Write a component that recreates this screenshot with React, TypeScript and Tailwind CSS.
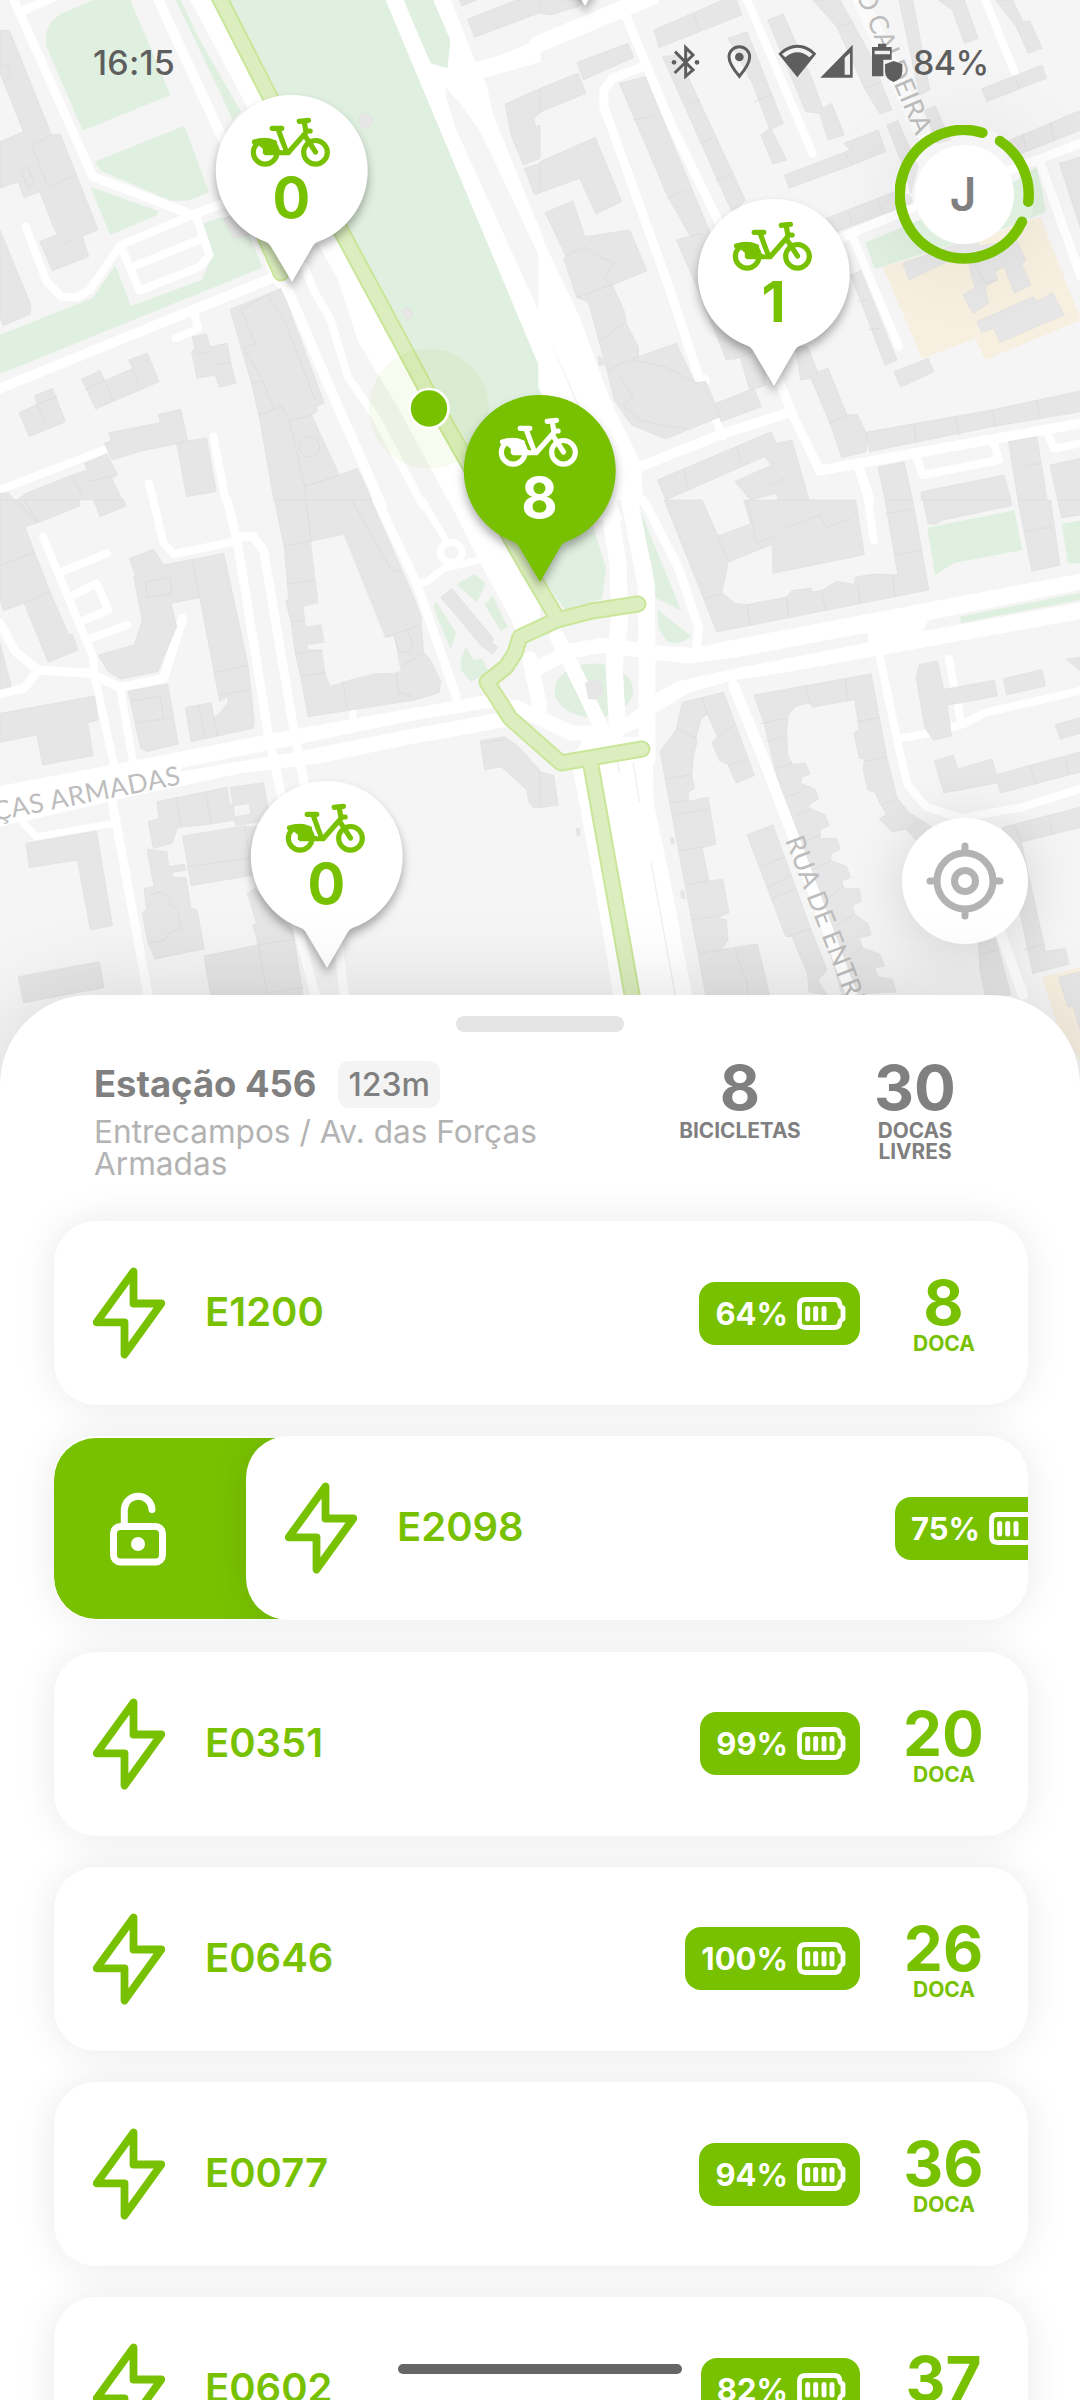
import React from "react";

type Tile = {
  transform: string;
  green: string;
  sand?: string;
  buildings: string;
  yards?: string;
  seams: string;
  roads: string;
  lanes: [number, string][];
};

const TILES: Tile[] = [
  {
    transform: "scale(0.34439 0.33333)",
    green:
      "M1172 0 1258 0 1308 120 1300 205 1250 190 1210 100Z M270 0 378 0 440 150 495 285 240 392 135 140 135 95 150 65 170 45Z M510 0 525 0 575 110 700 335 675 360 640 280Z M275 485 535 377 607 577 548 602 495 602 292 512Z M262 560 458 632 458 645 320 705Z M0 1005 270 893 335 795 380 918 585 840 620 765 590 670 650 650 680 715 725 705 762 803 0 1122Z",
    buildings:
      "M0 90 28 92 150 405 175 402 222 525 285 690 180 732 155 680 115 575 70 593 52 545 0 565 0 425 68 395 0 220Z M115 725 165 705 178 732 240 712 258 770 152 812Z M0 690 90 915 88 942 10 977 0 955Z M668 928 770 885 815 865 832 905 942 1208 918 1220 920 1235 905 1245 985 1425 1038 1405 1080 1500 795 1500 752 1245 730 1150Z M558 1010 600 1002 610 1040 660 1030 670 1085 685 1150 637 1162 625 1125 572 1135 556 1055 565 1048Z M237 1138 290 1112 305 1142 385 1105 373 1080 428 1060 462 1145 278 1227Z M55 1238 108 1212 100 1187 153 1165 190 1265 85 1310Z M303 1330 323 1322 316 1298 465 1268 460 1243 525 1228 545 1323 600 1313 628 1475 542 1490 513 1332 415 1352 325 1380Z M245 1390 310 1362 342 1425 325 1435 355 1500 50 1500 75 1480 210 1425 253 1410Z M0 1480 25 1478 40 1500 0 1500Z M1165 930 1185 922 1202 945 1182 962Z M1335 0 1385 0 1340 18Z M1357 58 1500 0 1568 0 1568 38 1378 112Z M1467 312 1568 265 1568 340 1550 355 1555 380 1568 375 1568 475 1520 495 1485 410Z M1522 505 1568 490 1568 580 1552 585Z M1042 362a20 22 0 1 0 40 0a20 22 0 1 0 -40 0Z M650 655 690 640 725 705 678 717Z",
    seams:
      "M92 438 140 560 222 525M92 438 150 405M700 930 742 1030 707 1043M700 930 775 885 830 970 915 1200M752 1245 818 1218 840 1262 905 1245M840 1262 885 1460 985 1425M730 1150 762 1142M762 1142 707 1043M762 1142 795 1225M885 1460 888 1500M305 1142 330 1205M385 1105 405 1160M108 1212 130 1270M108 1212 165 1190M245 1170 305 1142M570 1065 612 1055M625 1095 670 1085M868 1340a30 30 0 1 0 60 0a30 30 0 1 0 -60 0M513 1332 545 1323M210 1425 240 1490M253 1445 325 1428M0 200 20 193 32 222 15 238M60 515 80 500 100 550 85 565Z",
    roads:
      "M552 0 720 325 925 735 980 835 1040 1025 1160 1230 1300 1500 1430 1500 1345 1360 1240 1165 785 290 640 0Z M1120 0 1172 0 1250 190 1300 210 1285 260 1325 390 1580 970 1580 1135Z M1258 0 1310 0 1380 185 1415 260 1430 340 1580 720 1580 800 1395 395 1335 310 1328 260 1300 205 1308 120Z M1380 185 1440 170 1570 115 1570 185 1440 225 1395 235Z M1255 195 1300 205 1380 185 1400 240 1335 310 1295 262 1290 350Z",
    lanes: [
      [10, "M460 0 610 335 730 600 800 830 840 880 960 1170 1110 1520M800 830 0 1165"],
      [9, "M40 0 270 530 560 645 660 605M60 35 160 -10"],
      [8, "M885 800 910 870 960 960 1010 1130 1090 1250 1230 1520"],
      [8, "M560 645 350 735 260 870 225 892 180 892 135 845 75 680M350 735 405 872 580 800 608 765 570 650M385 800 590 715M565 945 575 985 510 1015M300 1350 0 1470M620 1310 655 1500M432 1450 445 1500"],
    ],
  },
  {
    transform: "translate(540 0) scale(0.34505 0.33333)",
    green: "M943 728 1110 655 1375 545 1440 500 1467 635 1375 675 970 807Z",
    sand: "M993 800 1200 740 1450 650 1568 960 1290 1080 1262 1015 1108 1077Z",
    buildings:
      "M0 0 130 0 110 20 30 45 0 40Z M330 90 530 0 570 0 585 45 345 143Z M107 187 255 130 272 172 125 240Z M0 265 110 220 133 280 0 337Z M0 485 160 412 237 605 162 642 115 535 0 578Z M15 638 95 602 130 710 260 690 310 812 210 855 245 935 250 970 285 1040 285 1070 395 1030 450 1150 480 1143 523 1250 365 1317 265 1275 215 1200 195 1115 170 1020 140 905 107 893 68 775 75 768Z M230 250 305 230 490 690 640 1000 655 1155 608 1172 580 1070 540 1080 450 850 395 720 435 708 370 590Z M355 170 400 165 595 600 560 640 540 600Z M545 115 600 95 705 370 670 388 715 480 675 492 640 405 665 385 615 250Z M660 60 705 42 790 240 820 325 845 310 882 405 835 420 810 340 770 335Z M790 0 870 0 960 170 1020 330 985 342 940 265 860 80Z M708 525 900 450 880 430 980 390 1002 455 905 495 722 565Z M1040 0 1080 0 1130 270 1100 285Z M1155 0 1230 0 1270 115 1230 130 1195 30Z M1320 0 1370 0 1400 65 1420 62 1455 145 1415 160 1380 80Z M1280 267 1455 195 1468 235 1295 305Z M1005 375 1037 362 1095 500 1075 580 1060 520Z M1115 330 1145 317 1190 420 1150 430Z M1340 430 1568 330 1568 390 1360 475Z M830 655 1040 570 1075 590 1080 610 860 695Z M900 825 930 812 1035 1080 1000 1095Z M1025 1115 1125 1075 1142 1115 1045 1162Z M1505 490 1568 470 1568 690Z M740 1040 775 1040 805 1115 835 1105 890 1245 920 1243 950 1310 945 1355 875 1373 840 1270 785 1135 755 1140Z M945 1297 1090 1270 1310 1230 1568 1172 1568 1235 1310 1280 955 1355Z M510 1210 620 1165 642 1220 525 1265Z M340 1440 670 1295 685 1330 730 1320 780 1500 690 1500 685 1480 610 1500 565 1445 670 1395 650 1370 365 1500Z M980 1402 1055 1385 1080 1500 1000 1500Z M1105 1475 1345 1425 1365 1500 1105 1500Z M1358 1325 1440 1310 1470 1500 1385 1500Z M1478 1395 1568 1375 1568 1500 1500 1500Z M168 1070 182 1075 185 1095 170 1095Z M1052 790 1200 735 1270 725 1275 760 1180 785 1070 840Z M1260 740 1380 720 1408 780 1395 790 1423 855 1375 880 1345 800 1320 815 1325 840 1290 860 1300 910 1255 940 1225 885 1260 865 1240 780Z M1265 965 1430 890 1440 905 1485 878 1520 945 1333 1027 1315 985 1280 997Z",
    seams:
      "M445 42 462 92M75 768 130 740 160 765 215 790 185 835 210 855M107 893 205 855M175 1020 245 970M195 1110 285 1070M270 1080 360 1100 455 1150M230 1130 270 1190 240 1215 290 1260 370 1280 430 1285M270 360 330 348M370 595 420 570M435 708 470 700M430 315 465 300M465 430 500 415M510 540 555 522M620 305 670 285M740 160 790 150M865 80 910 65M940 265 985 250M885 460 905 495M890 630 905 670M980 600 995 640M920 905 950 900M950 990 985 985M1085 1270 1090 1330M1205 1250 1215 1308M1310 1230 1320 1280M1440 1200 1450 1255M570 1340 585 1390M415 1410 430 1460M785 1135 805 1115M840 1270 890 1245M1400 400 1410 455M1480 370 1490 420M1380 240 1390 265M665 1455 720 1430M1255 780 1290 850 1325 840M1395 1400 1450 1390M560 1080 625 1050",
    roads: "M-5 690 115 950 200 1190 290 1385 300 1500 220 1500 150 1300 -5 940Z M-5 930 60 1100 190 1420 240 1560 150 1560 -5 1160Z",
    lanes: [
      [17, "M-5 132 325 -10"],
      [9, "M250 50 310 200 385 385 520 670 700 1160 730 1240 810 1410M310 195 210 235 185 270 185 320 370 850 460 1130 480 1140M870 715 1130 600 1568 430M1450 490 1568 830"],
      [8, "M600 0 790 460M1290 0 1375 215M910 720 1040 1040M510 1260 530 1310M1090 1370 1110 1425 1330 1380 1315 1330M1470 1300 1490 1345 1568 1330"],
      [14, "M930 0 1110 400"],
      [10, "M810 1412 1030 1370 1568 1270M730 1235 520 1305 290 1400 265 1440 290 1500M290 1400 250 1385 225 1330M925 1405 955 1500"],
    ],
  },
  {
    transform: "translate(0 500) scale(0.34439 0.33333)",
    green:
      "M1325 253 1378 222 1410 250 1385 307Z M1265 303 1325 400 1308 447 1260 325Z M1408 315 1430 287 1475 382 1453 392Z M1337 480 1353 440 1375 480 1400 475 1420 515 1368 545 1338 510Z",
    buildings:
      "M0 0 48 0 110 68 72 80 145 275 200 405 210 402 227 450 140 487 70 310 10 332 0 300Z M40 0 230 0 232 18 110 68Z M272 0 360 0 366 18 290 50Z M0 430 33 560 0 568Z M375 175 447 148 475 195 650 160 720 495 738 660 735 685 555 725 538 622 612 608 618 650 632 648 663 605 660 590 638 605 580 293 497 310 513 380 458 515 350 537 315 515 285 465 390 435 413 360 388 230 393 225Z M372 573 487 552 518 733 425 755 408 745Z M0 640 275 588 285 660 255 668 270 767 123 795 107 705 0 727Z M797 0 1078 0 1205 300 1222 350 1230 455 1250 480 1280 545 1275 578 1205 600 895 650 873 530 858 465 845 365 830 305 838 295 825 140Z M1280 292 1312 265 1432 415 1428 428 1445 440 1432 462 1400 440Z M1395 722 1465 710 1500 735 1568 810 1568 920 1550 925 1535 905 1530 870 1455 800 1407 810Z M455 905 660 862 665 910 677 915 682 960 615 972 515 983 500 1030 445 1045 430 965 462 955Z M668 862 765 848 785 960 685 977 680 950 728 942 724 910 677 918Z M530 1008 710 978 760 980 770 1120 555 1157Z M427 1048 485 1055 490 1100 535 1092 540 1110 500 1118 502 1132 540 1132 555 1225 572 1228 593 1347 450 1377 430 1330 413 1238 425 1230 418 1165 447 1160Z M718 1180 740 1165 800 1240 850 1290 880 1485 612 1485 592 1368 748 1335 745 1310 733 1275 745 1270Z M75 1030 280 993 327 1277 262 1290 225 1080 85 1103Z M53 1430 288 1385 302 1463 68 1508Z",
    yards:
      "M903 125 998 105 1118 412 1145 410 1163 512 1145 518 1090 520 1045 530 995 545 960 557 945 520 935 450 895 447 895 435 943 428 933 373 888 378 882 320 925 310Z",
    seams:
      "M0 195 100 157M70 310 145 275M70 0 110 68M558 180 580 293M623 518 720 495M638 585 722 570M575 615 597 715M612 608 632 710M422 247 493 232 500 280 428 293ZM380 603 465 590 475 655M395 670 500 652M825 138 903 122M835 253 915 240M845 365 885 360M858 462 935 450M873 530 947 517M995 545 1008 625M1150 518 1158 590M888 0 903 122M1020 0 1140 215 1158 210M1118 412 1222 375M1145 410 1158 455 1190 455 1200 430 1180 385M1163 500 1230 458M1158 575 1200 590M512 890 525 980M597 875 613 970M545 1100 760 1068M710 978 725 1070M435 1185 465 1175 490 1195 500 1220 515 1225 525 1285 490 1300 480 1320 430 1330M748 1335 850 1318M750 1335 775 1480 880 1462M1400 730 1465 718",
    roads:
      "M0 858 400 780 860 687 1180 628 1440 580 1440 620 1180 665 880 730 530 803 525 815 880 752 1180 690 1440 640 1500 625 1500 675 1180 735 930 790 700 820 400 885 0 980Z M1300 -5 1430 -5 1568 300 1568 380 1500 395 1480 350 1395 190Z",
    lanes: [
      [9, "M660 0 690 130 780 710 820 900M690 110 735 110 765 150 855 700 885 860 915 1020M325 900 430 1485M860 1270 915 1485M970 1240 1000 1485"],
      [8, "M445 0 475 130 505 162 680 125M125 110 270 470 275 530 330 790M350 570 385 780M180 215 310 160M205 290 280 250 315 330 235 365M250 420 370 375"],
      [9, "M0 370 45 455 110 510 260 520 350 562 475 535 530 355M110 510 70 565 0 580"],
      [7, "M60 960 105 1010 330 970M1210 250 1240 245 1290 205 1390 180M1225 0 1300 130M1278 157a32 30 0 1 0 64 0a32 30 0 1 0 -64 0M1025 630 1025 650"],
      [9, "M1090 -10 1210 250 1325 590"],
    ],
  },
  {
    transform: "translate(540 500) scale(0.34505 0.3699)",
    green:
      "M275 0 300 50 410 300 335 265 325 180Z M340 295 440 370 400 388 370 383 345 350Z M1122 75 1375 28 1398 135 1200 170 1145 203Z M1512 65 1568 55 1568 170 1530 172Z M1218 315 1568 250 1568 270 1220 333Z M42 515a114 73 0 1 0 228 0a114 73 0 1 0 -228 0Z",
    sand: "M1455 1290 1568 1263 1568 1520 1500 1420Z",
    buildings:
      "M360 0 470 0 515 95 545 165 540 195 527 250 565 280 600 283 715 262 730 245 785 238 790 248 815 245 860 220 910 228 915 208 970 200 1037 203 1000 0 1080 0 1127 243 512 357 475 268Z M590 0 915 0 940 148 675 198 673 120 547 167 515 97 610 65Z M1110 0 1365 0 1367 15 1165 55 1150 65 1125 65Z M1385 0 1480 0 1507 177 1425 192Z M1500 0 1568 0 1568 40 1512 48Z M620 527 960 470 1005 695 1035 805 1070 845 1145 890 1100 930 1060 890 1020 897 983 862 1005 850 985 820 970 790 950 785 937 730 940 700 925 697 910 630 925 620 912 540 880 545 790 560 780 548 740 558 720 580 715 620 718 690 732 715 768 710 783 740 760 750 755 765 797 782 807 808 780 825 775 830 825 850 838 880 812 890 812 915 860 915 870 945 843 958 843 975 888 990 900 1020 875 1030 880 1050 925 1050 932 1085 905 1095 912 1120 950 1145 960 1175 925 1185 935 1210 985 1228 998 1260 970 1265 980 1290 1020 1295 1033 1330 875 1338 800 1090 735 900 680 725 650 605Z M412 547 532 520 622 745 568 765 545 715 520 705 498 655 515 640 485 580 468 590 452 640 455 655 445 690 440 745 448 780 430 790 430 815 487 803 510 930 470 940 490 1030 530 1025 548 1115 515 1130 540 1135 545 1190 525 1215 630 1200 665 1338 480 1338 348 680 395 620Z M600 905 675 878 785 1160 832 1270 805 1300 833 1338 780 1330 775 1280 730 1180 712 1180Z M1100 445 1152 435 1170 512 1317 487 1325 530 1180 555 1193 638 1140 650 1115 615 1090 480Z M1343 483 1455 458 1465 503 1352 527Z M1525 430 1568 425 1568 465Z M1493 607 1568 588 1568 630 1508 647Z M1143 705 1198 690 1210 727 1310 700 1323 742 1568 680 1568 735 1335 792 1325 765 1170 792Z M1340 885 1568 830 1568 885 1395 925 1465 1220 1522 1212 1533 1255 1428 1280Z M1270 1195 1320 1185 1365 1338 1290 1338 1275 1270Z M1503 1290 1568 1275 1568 1440 1545 1370 1530 1370Z M0 735 40 745 53 825 0 832Z M105 888 115 888 116 908 107 908Z M378 912 388 914 388 930 380 930Z M408 1055 418 1058 420 1078 410 1076Z",
    seams:
      "M475 268 527 252M600 283 608 340M715 262 720 320M815 245 828 300M918 222 930 280M1020 200 1030 262M1030 150 1100 135M1000 38 1070 25M600 0 628 115 675 100M715 75 810 40 830 75 900 50M770 500 782 550M885 485 893 540M640 605 712 590M655 652 715 638M920 600 985 588M945 705 1003 695M988 825 1035 808M1065 895 1095 862M680 728 730 712M710 805 755 788M740 855 780 840M765 925 815 905M790 1000 843 975M830 1080 880 1045M860 1150 912 1120M900 1230 935 1210M470 535 485 580M395 620 455 645M515 640 565 608M545 718 595 700M365 755 440 742M378 820 430 812M385 852 490 835M402 948 470 938M422 1040 490 1030M440 1135 515 1125M460 1228 525 1215M565 1212 580 1260 600 1300 602 1338M635 992 710 965M658 1048 730 1015M670 1080 740 1050M718 1180 785 1158M1405 85 1485 72M1420 718 1435 765M1522 695 1532 740M1475 860 1485 905M1375 880 1395 925M1405 1215 1465 1200M1280 1228 1330 1215",
    roads:
      "M330 393 450 400 560 378 1568 198 1568 242 1125 325 1110 355 952 385 950 358 570 425 430 442 330 432Z M330 525 400 490 570 455 952 385 1110 355 1568 277 1568 322 700 468 560 487 430 522 330 580Z M90 700 130 640 325 640 330 820 380 1040 440 1338 212 1338 160 1050Z",
    lanes: [
      [15, "M-20 460 90 408 180 393 340 412M-70 560 0 590 90 630 200 630 270 600 340 548M50 370 130 520 190 640M-30 430 0 560"],
      [17, "M195 -20 227 180 230 330 215 450 225 620M255 -20 308 230 310 420 310 700"],
      [9, "M300 0 400 180 460 345 455 395"],
      [8, "M985 425 1040 670 1065 770 1120 830 1220 860 1400 830 1568 780M1040 645 1130 630 1230 605 1290 575 1568 515M1185 430 1220 600M950 0 968 110"],
      [10, "M560 500 650 705 730 900 880 1280 905 1340M1330 1160 1400 1338"],
    ],
  },
];

const CYCLE = "M218 -5 270 97 339 227 425 387 455 440 527 567 557 618M638 604 592 611 557 620 520 637 515 653 506 667 487 682 510 718 561 763 642 749M590 760 633 1000M262 230 281 273";

function CityMap() {
  return (
    <svg className="absolute inset-0" width="1080" height="1110" viewBox="0 0 1080 1110" fill="none">
      <rect width="1080" height="1110" fill="#f5f5f5" />
      <path d="M218 0H385.7L540 368 545 393 593.5 527.7 606 568 602 599 566 611 543.5 580Z" fill="#e0f0e0" />
      {TILES.map((t) => (
        <g key={t.transform} transform={t.transform}>
          <path d={t.green} fill="#e0f0e0" />
          {t.sand && <path d={t.sand} fill="#f7f0e1" />}
        </g>
      ))}
      {TILES.map((t) => (
        <g key={t.transform} transform={t.transform} strokeLinejoin="round" strokeLinecap="round">
          {t.lanes.map(([w, d]) => (
            <path key={d} d={d} stroke="#fff" strokeWidth={w} vectorEffect="non-scaling-stroke" />
          ))}
          <path d={t.roads} fill="#fff" />
        </g>
      ))}
      {TILES.map((t) => (
        <g key={t.transform} transform={t.transform}>
          <path d={t.buildings} fill="#e6e6e6" stroke="#dedede" strokeWidth="0.6" vectorEffect="non-scaling-stroke" />
          {t.yards && <path d={t.yards} fill="#f5f5f5" />}
          <path d={t.seams} stroke="#dadada" strokeWidth="0.8" vectorEffect="non-scaling-stroke" />
        </g>
      ))}
      <g transform="translate(540 500) scale(0.34505 0.3699)">
        <path d="M130 495 150 488 178 490 185 520 165 540 140 538Z" fill="#e6e6e6" />
        <path d="M560 500 650 705 730 900 880 1280 905 1340" stroke="#fff" strokeWidth="11" vectorEffect="non-scaling-stroke" />
        <path d="M225 705 230 740M270 710 288 815M322 980 392 1338" stroke="#f1f1f1" strokeWidth="1.500" vectorEffect="non-scaling-stroke" />
      </g>
      <path d="M860 0 922 134" stroke="#fafafa" strokeWidth="15" />
      <g strokeLinecap="round" strokeLinejoin="round">
        <path d={CYCLE} stroke="#c9e699" strokeWidth="17" />
        <path d={CYCLE} stroke="#dceebf" strokeWidth="13" />
      </g>
      <g fill="#bdbdbd" fontFamily="Lato, sans-serif" fontSize="26.500">
        <text transform="translate(-5 821) rotate(-11.2)" textLength="190">ÇAS ARMADAS</text>
        <text transform="translate(785 840) rotate(69)">RUA DE ENTRECAMPOS</text>
        <text transform="translate(916 136) rotate(67)" textAnchor="end">LO CALDEIRA</text>
      </g>
      <circle cx="429" cy="408.5" r="60" fill="#78c100" fillOpacity="0.06" />
      <circle cx="429" cy="408.5" r="19.5" fill="#78c100" stroke="#fff" strokeWidth="2.6" />
    </svg>
  );
}

function Pin({ place, count, active = false }: { place: string; count: string; active?: boolean }) {
  const ink = active ? "#fff" : "#78c100";
  return (
    <svg
      className={"absolute overflow-visible drop-shadow-[0_6px_5px_rgba(0,0,0,0.32)] " + place}
      width="152"
      height="188"
      viewBox="0 0 152 188"
      fill="none"
    >
      <path d="M76 0a75.700 75.700 0 0 1 26 146.800q-3 1-5 4L76 187 54.500 150.800q-2-3-5-4A75.700 75.700 0 0 1 76 0Z" fill={active ? "#78c100" : "#fff"} />
      <g transform="translate(-16.500 -5) scale(0.33333)" stroke={ink} strokeWidth="15.500" strokeLinecap="round" strokeLinejoin="round">
        <circle cx="197" cy="187" r="35.500" />
        <circle cx="348" cy="187" r="35.500" />
        <path d="M348 186 318 140M299 94 327 91M314 94 319 123H332M320 127 266 188H200M218 115H247M236 118 258 178" />
        <path d="M159 151 Q200 135 232 158 L246 192 H190 V176 Q170 160 159 157Z" fill={ink} stroke="none" />
        <path d="M165 156 Q200 145 225 158" />
        <path d="M242 164 249 180" stroke={active ? "#78c100" : "#fff"} strokeWidth="4" />
      </g>
      <text x="75.500" y="123" textAnchor="middle" fontFamily="Inter, sans-serif" fontWeight="700" fontSize="56" fill={ink}>
        {count}
      </text>
    </svg>
  );
}

function StatusBar() {
  return (
    <div className="relative flex h-[124px] items-center pl-[93px] pr-[92px] text-[34px] font-medium text-[#5e5e5e]">
      <span className="font-['Inter'] tracking-[0.2px]">16:15</span>
      <svg className="ml-auto" width="235" height="47" viewBox="90 28 705 141" fill="none">
        <g stroke="#5e5e5e" strokeWidth="9">
          <path d="M105 66 159 121 137 140V54L159 76 104 130" />
          <path d="M298 140Q267 103 267 82a31 31 0 0 1 62 0Q329 103 298 140Z" />
        </g>
        <g fill="#5e5e5e">
          <circle cx="102" cy="98" r="7" />
          <circle cx="171" cy="98" r="7" />
          <circle cx="298" cy="82" r="13" />
          <path d="M415 72C450 36 495 36 529 72L472 143Z" />
          <path d="M541 144 638 45V144Z" />
          <path d="M714 42H738V52H755V140H696V52H714Z" />
        </g>
        <path d="M426 74C455 48 490 48 518 74L508 83C485 63 460 63 436 83ZM614 84 630 70V135H614ZM704 63H750V74H704ZM730 90H756V145H730Z" fill="#f1f1f1" />
        <path d="M761 94 787 104V124Q787 148 761 157 735 148 735 124V104Z" fill="#5e5e5e" />
      </svg>
      <span className="ml-[8px] w-[75px] whitespace-nowrap font-['Inter'] tracking-[-0.6px]">84%</span>
    </div>
  );
}

function Avatar() {
  return (
    <div className="absolute left-[895px] top-[125px] flex size-[139px] items-center justify-center rounded-full shadow-[0_0_90px_rgba(0,0,0,0.07)]">
      <svg className="absolute inset-0" width="139" height="139" viewBox="896 125 139 139" fill="none" stroke="#78c100" strokeWidth="10.500" strokeLinecap="round">
        <path d="M983.400 132.700A64.200 64.200 0 1 0 1023 221.700M1001 141A64.200 64.200 0 0 1 1029.300 201.700" />
      </svg>
      <div className="flex size-[99px] items-center justify-center rounded-full bg-white pr-[3px] text-[46px] font-semibold text-[#808080]">J</div>
    </div>
  );
}

function LocateButton() {
  return (
    <div className="absolute left-[902px] top-[818px] flex size-[126px] items-center justify-center rounded-full bg-white shadow-[0_6px_60px_rgba(0,0,0,0.14)]">
      <svg width="80" height="80" viewBox="-40 -40 80 80" fill="none" stroke="#b3b3b3" strokeWidth="7" strokeLinecap="round">
        <circle r="28" />
        <circle r="10.500" />
        <path d="M0-35V-30M0 35V30M-35 0H-30M35 0H30" />
      </svg>
    </div>
  );
}

function Bolt() {
  return (
    <svg width="72" height="92" viewBox="93 1267 72 92" fill="none" stroke="#78c100" strokeWidth="7.800" strokeLinecap="round" strokeLinejoin="round">
      <path d="M133.500 1271.500V1303.500H161.300L124.500 1354.500V1322.300H96.700Z" />
    </svg>
  );
}

function Battery({ bars }: { bars: number }) {
  return (
    <svg width="49" height="33" viewBox="0 0 49 33" fill="none" stroke="#fff" strokeWidth="4.800" strokeLinecap="round" strokeLinejoin="round">
      <path d="M8.500 2.500H37.500Q42.500 2.500 42.800 7.500 43 10 46 11V22Q43 23 42.800 25.500 42.500 30.500 37.500 30.500H8.500Q2.500 30.500 2.500 24.500V8.500Q2.500 2.500 8.500 2.500Z" />
      {[10.7, 18.7, 27, 35].slice(0, bars).map((x) => (
        <path key={x} d={`M${x} 11.500V22`} strokeWidth="5" />
      ))}
    </svg>
  );
}

function BikeCard({ id, charge, bars, dock }: { id: string; charge: string; bars: number; dock: string }) {
  return (
    <div className="flex h-[184px] w-[974px] shrink-0 items-center rounded-[42px] bg-white pl-[39px] text-[#78c100] shadow-[0_0_40px_rgba(0,0,0,0.085)]">
      <Bolt />
      <span className="ml-[40px] pb-[2px] text-[40px] font-semibold leading-[48px]">{id}</span>
      <div className="ml-auto flex h-[63px] items-center gap-[9px] rounded-[16px] bg-[#78c100] pl-4 pr-3.5 text-white">
        <span className="text-[31px] font-bold leading-none">{charge}</span>
        <Battery bars={bars} />
      </div>
      <div className="flex w-[168px] flex-col items-center font-bold">
        <span className="-ml-px text-[62px] leading-[62px]">{dock}</span>
        <span className="text-[21px] leading-[20px]">DOCA</span>
      </div>
    </div>
  );
}

function Unlock() {
  return (
    <svg className="ml-[56px]" width="56" height="75" viewBox="110 1489 56 75" fill="none" stroke="#fff" strokeWidth="7" strokeLinecap="round">
      <rect x="113.500" y="1524.500" width="49" height="35.500" rx="7" />
      <path d="M124.300 1524V1507A13.900 14.300 0 0 1 152 1507.500" />
      <circle cx="138" cy="1542" r="7" fill="#fff" stroke="none" />
    </svg>
  );
}

function Stat({ value, label }: { value: string; label: string }) {
  return (
    <div className="flex w-[140px] flex-col items-center text-center font-bold text-[#808080]">
      <span className="text-[62px] leading-[63px]">{value}</span>
      <span className="mt-px px-1 text-[20.800px] leading-[21px]">{label}</span>
    </div>
  );
}

export default function App() {
  return (
    <div className="relative flex h-[2400px] w-[1080px] flex-col overflow-hidden bg-white font-['Inter',sans-serif]">
      <section className="relative h-[1100px] shrink-0 overflow-hidden">
        <CityMap />
        <Pin place="left-[509px] top-[-181px]" count="0" />
        <Pin place="left-[216px] top-[95px]" count="0" />
        <Pin place="left-[698px] top-[199px]" count="1" />
        <Pin place="left-[464px] top-[395px]" count="8" active />
        <Pin place="left-[251px] top-[781px]" count="0" />
        <StatusBar />
        <Avatar />
        <LocateButton />
      </section>

      <section className="relative -mt-[105px] flex grow flex-col rounded-t-[90px] bg-white shadow-[0_0_90px_rgba(0,0,0,0.13)]">
        <div className="mx-auto mt-[21px] h-4 w-[168px] shrink-0 rounded-full bg-[#e4e4e4]" />
        <header className="mt-[24px] flex h-[165px] shrink-0 items-start pl-[94px]">
          <div className="w-[560px] pt-[5px]">
            <div className="flex items-center gap-[22px] text-[#808080]">
              <h1 className="text-[36.400px] font-bold leading-[47px]">Estação 456</h1>
              <span className="rounded-[11px] bg-[#f4f4f4] px-[10px] text-[32px] font-medium leading-[47px]">123m</span>
            </div>
            <p className="mt-[8px] w-[470px] text-[31.600px] leading-[32px] text-[#b3b3b3]">Entrecampos / Av. das Forças Armadas</p>
          </div>
          <div className="ml-[16px] flex gap-[35px]">
            <Stat value="8" label="BICICLETAS" />
            <Stat value="30" label="DOCAS LIVRES" />
          </div>
        </header>

        <div className="flex flex-col gap-[31.300px] pl-[54px]">
          <BikeCard id="E1200" charge="64%" bars={3} dock="8" />
          <div className="w-[974px] rounded-[42px] shadow-[0_0_40px_rgba(0,0,0,0.085)]">
            <div className="relative flex h-[184px] items-center overflow-hidden rounded-[42px] bg-white">
              <div className="flex h-[181px] w-[300px] shrink-0 items-center rounded-l-[42px] bg-[#78c100]">
                <Unlock />
              </div>
              <div className="relative -ml-[108px]">
                <BikeCard id="E2098" charge="75%" bars={3} dock="9" />
              </div>
            </div>
          </div>
          <BikeCard id="E0351" charge="99%" bars={4} dock="20" />
          <BikeCard id="E0646" charge="100%" bars={4} dock="26" />
          <BikeCard id="E0077" charge="94%" bars={4} dock="36" />
          <BikeCard id="E0602" charge="82%" bars={4} dock="37" />
        </div>
      </section>
      <div className="absolute bottom-[26px] left-1/2 h-[10px] w-[284px] -translate-x-1/2 rounded-full bg-[#666]" />
    </div>
  );
}
